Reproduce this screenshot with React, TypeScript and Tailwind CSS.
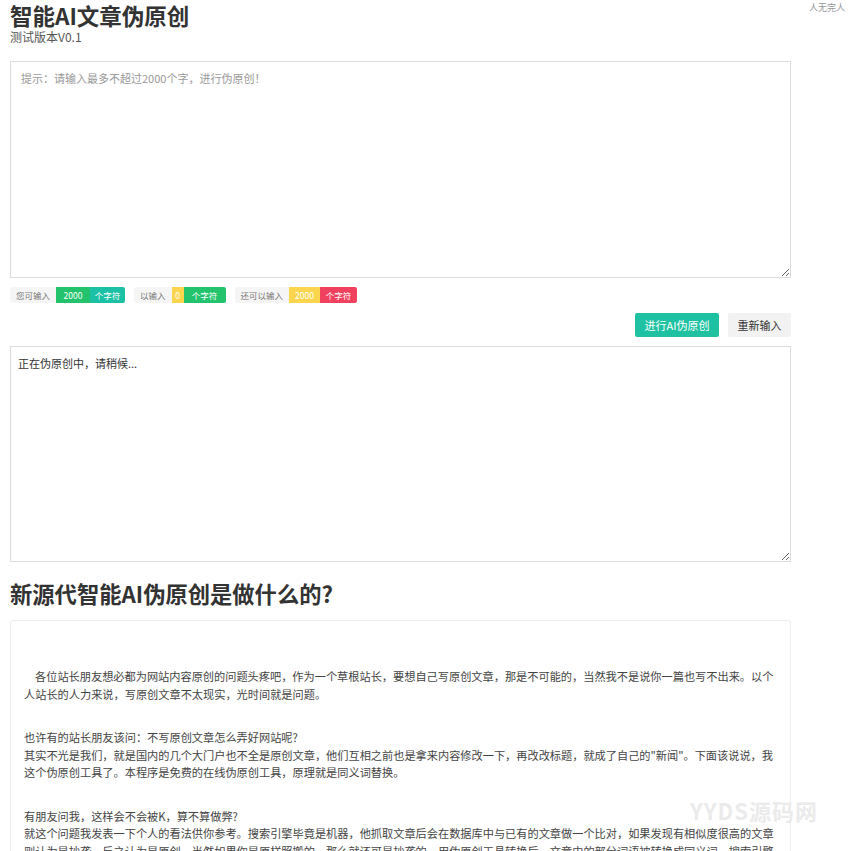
import React from "react";

const font = { fontFamily: '"Noto Sans CJK SC", "Liberation Sans", sans-serif' };

type Seg = { text: string; cls: string };

function Counter({ label, segs }: { label: string; segs: Seg[] }) {
  return (
    <div className="flex h-[16px] items-stretch text-[8.5px] leading-[16px]">
      <span className="rounded-l-[2px] bg-[#f5f5f5] px-[6px] text-[#777]">{label}</span>
      {segs.map((s, i) => (
        <span
          key={i}
          className={`${s.cls} ${i === segs.length - 1 ? "rounded-r-[2px]" : ""} text-center text-white`}
        >
          {s.text}
        </span>
      ))}
    </div>
  );
}

const paragraphs: string[][] = [
  [
    "各位站长朋友想必都为网站内容原创的问题头疼吧，作为一个草根站长，要想自己写原创文章，那是不可能的，当然我不是说你一篇也写不出来。以个人站长的人力来说，写原创文章不太现实，光时间就是问题。",
  ],
  [
    "也许有的站长朋友该问：不写原创文章怎么弄好网站呢?",
    "其实不光是我们，就是国内的几个大门户也不全是原创文章，他们互相之前也是拿来内容修改一下，再改改标题，就成了自己的\"新闻\"。下面该说说，我这个伪原创工具了。本程序是免费的在线伪原创工具，原理就是同义词替换。",
  ],
  [
    "有朋友问我，这样会不会被K，算不算做弊?",
    "就这个问题我发表一下个人的看法供你参考。搜索引擎毕竟是机器，他抓取文章后会在数据库中与已有的文章做一个比对，如果发现有相似度很高的文章则认为是抄袭，反之认为是原创，当然如果你是原样照搬的，那么就还可是抄袭的，用伪原创工具转换后，文章中的部分词语被转换成同义词，搜索引擎再进行比对的时候，他就认为是原创文章了。",
  ],
];

export default function App() {
  return (
    <div className="relative min-h-[851px] bg-white text-[#333]" style={font}>
      <div className="flex">
        {/* main column */}
        <div className="ml-[10px] w-[781px]">
          <h1 className="pt-[2px] text-[22.5px] font-bold leading-[26px] text-[#333]">智能AI文章伪原创</h1>
          <p className="mt-[2px] text-[12px] leading-[14px] text-[#555]">测试版本V0.1</p>

          <textarea
            className="mt-[17px] block h-[217px] w-full resize-y border border-[#dcdcdc] px-[10px] py-[7px] text-[11px] leading-[18px] text-[#333] outline-none placeholder:text-[#999]"
            placeholder="提示：请输入最多不超过2000个字，进行伪原创！"
          />

          {/* counters */}
          <div className="mt-[9px] flex gap-[9px]">
            <Counter
              label="您可输入"
              segs={[
                { text: "2000", cls: "w-[34px] bg-[#22c36c]" },
                { text: "个字符", cls: "w-[35px] bg-[#1cc0a5]" },
              ]}
            />
            <Counter
              label="以输入"
              segs={[
                { text: "0", cls: "w-[12px] bg-[#fad54d]" },
                { text: "个字符", cls: "w-[42px] bg-[#22c36c]" },
              ]}
            />
            <Counter
              label="还可以输入"
              segs={[
                { text: "2000", cls: "w-[31px] bg-[#fad54d]" },
                { text: "个字符", cls: "w-[37px] bg-[#f0415e]" },
              ]}
            />
          </div>

          {/* actions */}
          <div className="mt-[10px] flex justify-end gap-[9px]">
            <button className="h-[24px] w-[84px] rounded-[2px] bg-[#1ec2a2] text-[11px] text-white">
              进行AI伪原创
            </button>
            <button className="h-[24px] w-[63px] rounded-[2px] bg-[#f2f2f2] text-[11px] text-[#333]">
              重新输入
            </button>
          </div>

          <textarea
            readOnly
            className="mt-[9px] block h-[216px] w-full resize-y border border-[#dcdcdc] px-[7px] py-[7px] text-[11px] leading-[18px] text-[#333] outline-none"
            defaultValue="正在伪原创中，请稍候..."
          />

          <h2 className="mt-[16px] text-[22.3px] font-bold leading-[30px] text-[#333]">
            新源代智能AI伪原创是做什么的?
          </h2>

          {/* intro article */}
          <div className="mt-[12px] rounded-[3px] border border-[#eee] px-[13px] pb-[20px] pt-[47px] text-[11.2px] leading-[17.5px] text-[#444]">
            {paragraphs.map((lines, i) => (
              <div key={i} className={i > 0 ? "mt-[26px]" : ""}>
                {lines.map((l, j) => (
                  <p key={j} className={i === 0 ? "indent-[11px]" : ""}>
                    {l}
                  </p>
                ))}
              </div>
            ))}
          </div>
        </div>

        <div className="ml-auto pr-[5px] pt-[2px] text-[9px] leading-[12px] text-[#999]">人无完人</div>
      </div>

      {/* site watermark */}
      <div className="pointer-events-none absolute left-[690px] top-[797px] text-[22px] font-bold leading-[26px] tracking-[1px] text-[#ebebeb]">
        YYDS源码网
      </div>
    </div>
  );
}
